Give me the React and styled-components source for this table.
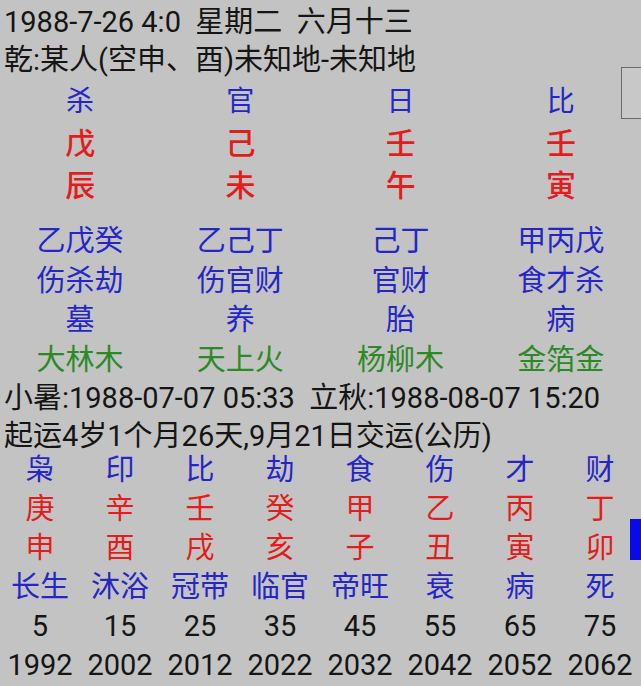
import React from "react";
import styled, { createGlobalStyle } from "styled-components";

const GlobalStyle = createGlobalStyle`
  html, body {
    margin: 0;
    padding: 0;
    background: #c3c3c3;
  }
  body {
    font-family: Roboto, "Noto Sans CJK SC", sans-serif;
    color: #111;
  }
`;

const pillars = [
  { god: "杀", stem: "戊", branch: "辰", hidden: "乙戊癸", gods: "伤杀劫", stage: "墓", nayin: "大林木" },
  { god: "官", stem: "己", branch: "未", hidden: "乙己丁", gods: "伤官财", stage: "养", nayin: "天上火" },
  { god: "日", stem: "壬", branch: "午", hidden: "己丁", gods: "官财", stage: "胎", nayin: "杨柳木" },
  { god: "比", stem: "壬", branch: "寅", hidden: "甲丙戊", gods: "食才杀", stage: "病", nayin: "金箔金" },
];

const luck = [
  { god: "枭", stem: "庚", branch: "申", stage: "长生", age: 5, year: 1992 },
  { god: "印", stem: "辛", branch: "酉", stage: "沐浴", age: 15, year: 2002 },
  { god: "比", stem: "壬", branch: "戌", stage: "冠带", age: 25, year: 2012 },
  { god: "劫", stem: "癸", branch: "亥", stage: "临官", age: 35, year: 2022 },
  { god: "食", stem: "甲", branch: "子", stage: "帝旺", age: 45, year: 2032 },
  { god: "伤", stem: "乙", branch: "丑", stage: "衰", age: 55, year: 2042 },
  { god: "才", stem: "丙", branch: "寅", stage: "病", age: 65, year: 2052 },
  { god: "财", stem: "丁", branch: "卯", stage: "死", age: 75, year: 2062 },
];

const colors = {
  blue: "#2626c8",
  red: "#e31c1c",
  green: "#2c8a26",
  dark: "#151515",
};

const Page = () => {
  return (
    <Screen>
      <GlobalStyle />
      <Header>
        <Line>1988-7-26 4:0&nbsp;&nbsp;星期二&nbsp;&nbsp;六月十三</Line>
        <Line>乾:某人(空申、酉)未知地-未知地</Line>
      </Header>

      <PillarGrid>
        {pillars.map((p, i) => (
          <Cell key={"g" + i} tone="blue">{p.god}</Cell>
        ))}
        {pillars.map((p, i) => (
          <Cell key={"s" + i} tone="red" big>{p.stem}</Cell>
        ))}
        {pillars.map((p, i) => (
          <Cell key={"b" + i} tone="red" big>{p.branch}</Cell>
        ))}
      </PillarGrid>

      <DetailGrid>
        {pillars.map((p, i) => (
          <Cell key={"h" + i} tone="blue">{p.hidden}</Cell>
        ))}
        {pillars.map((p, i) => (
          <Cell key={"t" + i} tone="blue">{p.gods}</Cell>
        ))}
        {pillars.map((p, i) => (
          <Cell key={"st" + i} tone="blue">{p.stage}</Cell>
        ))}
        {pillars.map((p, i) => (
          <Cell key={"n" + i} tone="green">{p.nayin}</Cell>
        ))}
      </DetailGrid>

      <Info>
        <Line>小暑:1988-07-07 05:33&nbsp;&nbsp;立秋:1988-08-07 15:20</Line>
        <Line>起运4岁1个月26天,9月21日交运(公历)</Line>
      </Info>

      <LuckGrid>
        {luck.map((l, i) => (
          <Cell key={"lg" + i} tone="blue">{l.god}</Cell>
        ))}
        {luck.map((l, i) => (
          <Cell key={"ls" + i} tone="red">{l.stem}</Cell>
        ))}
        {luck.map((l, i) => (
          <Cell key={"lb" + i} tone="red">{l.branch}</Cell>
        ))}
        {luck.map((l, i) => (
          <Cell key={"lst" + i} tone="blue">{l.stage}</Cell>
        ))}
        {luck.map((l, i) => (
          <Cell key={"la" + i} tone="dark">{l.age}</Cell>
        ))}
        {luck.map((l, i) => (
          <Cell key={"ly" + i} tone="dark">{l.year}</Cell>
        ))}
      </LuckGrid>

      <ScrollThumb />
      <PageMarker />
    </Screen>
  );
};

const Screen = styled.div`
  position: relative;
  width: 641px;
  height: 686px;
  overflow: hidden;
  background: #c3c3c3;
`;

const Header = styled.div`
  padding: 3px 0 0 4px;
`;

const Line = styled.div`
  font-size: 29px;
  line-height: 38px;
  color: ${colors.dark};
  white-space: nowrap;
`;

const Cell = styled.div`
  text-align: center;
  white-space: nowrap;
  color: ${({ tone }) => colors[tone]};
  font-size: ${({ big }) => (big ? "30px" : "inherit")};
  font-weight: ${({ big }) => (big ? 500 : 400)};
`;

const PillarGrid = styled.div`
  display: grid;
  grid-template-columns: repeat(4, 1fr);
  font-size: 28px;
  line-height: 42px;
  padding-top: 2px;
`;

const DetailGrid = styled.div`
  display: grid;
  grid-template-columns: repeat(4, 1fr);
  margin-top: 15px;
  font-size: 29px;
  line-height: 39.5px;
`;

const Info = styled.div`
  padding-left: 4px;
  margin-top: -1px;
`;

const LuckGrid = styled.div`
  display: grid;
  grid-template-columns: repeat(8, 1fr);
  width: 640px;
  margin-top: -4px;
  font-size: 29px;
  line-height: 39px;
`;

const ScrollThumb = styled.div`
  position: absolute;
  top: 67px;
  right: -2px;
  width: 20px;
  height: 50px;
  border: 1px solid #6a6a6a;
  background: #c8c8c8;
`;

const PageMarker = styled.div`
  position: absolute;
  top: 519px;
  right: 0;
  width: 11px;
  height: 41px;
  background: #0a0ae6;
`;

export default function App() {
  return <Page />;
}
